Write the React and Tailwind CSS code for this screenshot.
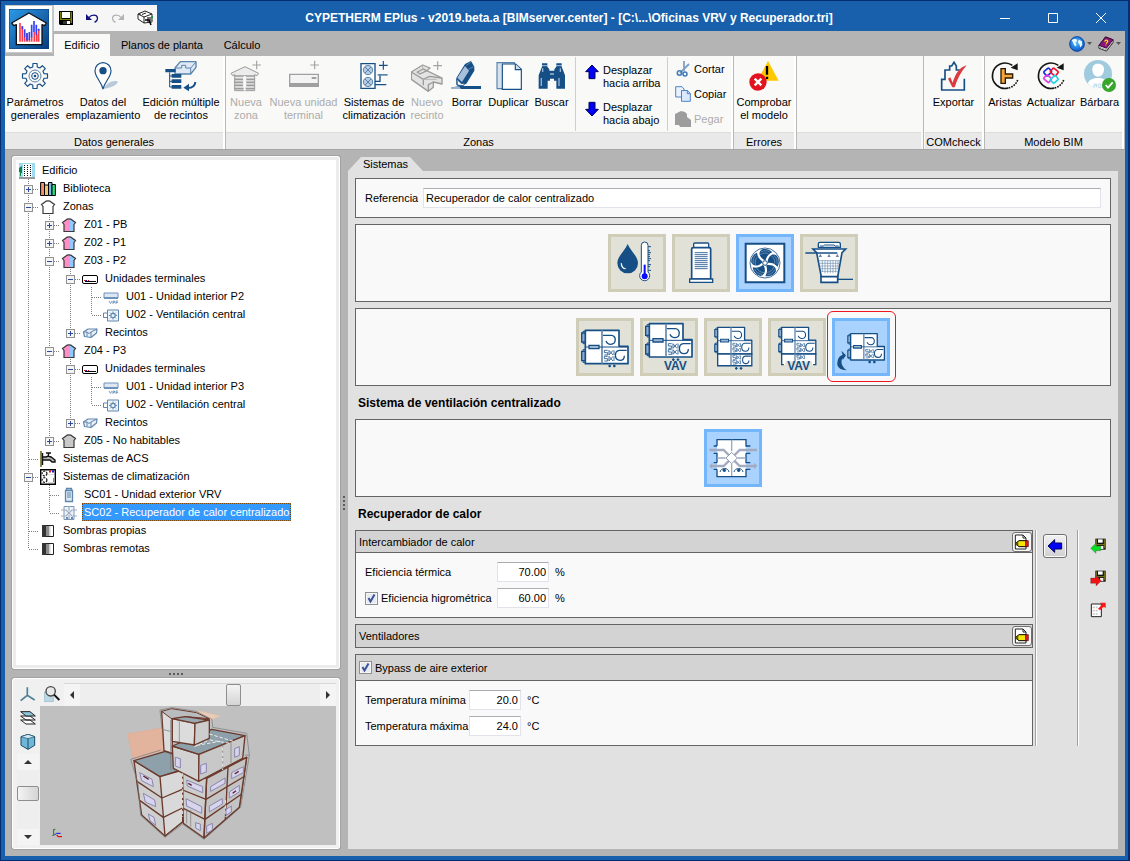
import React from "react";

const NAVY = "#164f86";

function Ico({ box, w = 32, h = 32, children }) {
  return (
    <svg viewBox={box} width={w} height={h} fill="none" aria-hidden="true" className="shrink-0">
      {children}
    </svg>
  );
}

/* ---------- ribbon and title icons ---------- */

function LogoIcon() {
  return (
    <Ico box="27 27 120 120" w={40} h={40}>
      <defs>
        <linearGradient id="logoBg" x1="0" y1="0" x2="1" y2="1">
          <stop offset="0" stopColor="#2d9ae8" />
          <stop offset="1" stopColor="#063a7c" />
        </linearGradient>
      </defs>
      <rect x="27" y="27" width="120" height="120" fill="url(#logoBg)" stroke="#0a3c78" strokeWidth="3" />
      <path d="M87 39 139 69 134 77 126 74V134H49V74L41 77 35 69Z" fill="#fff" stroke="#111" strokeWidth="4" strokeLinejoin="round" />
      <path d="M60 69V125M67 82V125M74 110V125M81 100V125M88 118V125M95 110V125M103 96V125M110 102V125M116 88V125" stroke="#ff3d48" strokeWidth="5" />
      <path d="M67 78V88M74 88V112M81 99V122M88 96V120M95 74V112M102 63V96M109 74V104M116 86V92" stroke="#3340f5" strokeWidth="5" />
    </Ico>
  );
}

function gearPath(cx, cy, r1, r2, teeth) {
  let d = "";
  for (let i = 0; i < teeth; i++) {
    const a = (i / teeth) * Math.PI * 2 - Math.PI / 2;
    const s = Math.PI / teeth;
    [[-0.62, r1], [-0.42, r2], [0.42, r2], [0.62, r1]].forEach(([k, r], j) => {
      const x = cx + r * Math.cos(a + k * s);
      const y = cy + r * Math.sin(a + k * s);
      d += `${i === 0 && j === 0 ? "M" : "L"}${x.toFixed(1)} ${y.toFixed(1)}`;
    });
  }
  return d + "Z";
}

function GearIcon() {
  return (
    <Ico box="57 180 96 96">
      <path d={gearPath(105, 228, 28, 38, 8)} stroke={NAVY} strokeWidth="3.5" strokeLinejoin="round" />
      <circle cx="105" cy="228" r="18" stroke="#5b84ac" strokeWidth="3" />
      <circle cx="105" cy="228" r="10" stroke={NAVY} strokeWidth="3" />
      <circle cx="105" cy="228" r="4" fill={NAVY} />
    </Ico>
  );
}

function PinIcon() {
  return (
    <Ico box="264 180 96 96">
      <path d="M312 267C322 250 340 240 356 244C358 254 335 264 312 267Z" fill="#b9c9dc" />
      <path d="M312 267C306 242 288 232 288 212A24 24 0 0 1 336 212C336 232 318 242 312 267Z" fill="#fff" stroke={NAVY} strokeWidth="3.5" />
      <circle cx="312" cy="212" r="11" fill={NAVY} />
    </Ico>
  );
}

function MultiEditIcon() {
  return (
    <Ico box="498 180 96 96">
      <path d="M528 204 544 185H591V202L575 222H528Z" fill="#dfe9f5" stroke="#5b84ac" strokeWidth="4" strokeLinejoin="round" />
      <path d="M528 204H548V196H560V204H575L591 186M575 204V222" stroke="#5b84ac" strokeWidth="3" />
      <path d="M499 207H530V217H499ZM518 222H547V233H518ZM518 238H547V249H518ZM518 255H547V266H518Z" fill={NAVY} />
      <path d="M512 217V261H520M512 228H520M512 244H520" stroke={NAVY} strokeWidth="3" />
      <path d="M589 246C588 258 578 264 566 264" stroke={NAVY} strokeWidth="6" />
      <path d="M553 263 570 251V274Z" fill={NAVY} />
    </Ico>
  );
}

function Plus({ x, y, c }) {
  return <path d={`M${x - 13} ${y}H${x + 13}M${x} ${y - 13}V${y + 13}`} stroke={c} strokeWidth="3.5" />;
}

function NewZoneIcon() {
  return (
    <Ico box="693 180 96 96">
      <path d="M738 200 779 220 774 227 767 224V272H707V224L701 227 696 220Z" fill="#ececec" stroke="#9b9b9b" strokeWidth="3" />
      <path d="M707 228H767M707 238H732M742 238H767M707 247H732M742 247H767M707 256H732M742 256H767M707 266H767" stroke="#9b9b9b" strokeWidth="5" />
      <path d="M737 228V272" stroke="#fafafa" strokeWidth="6" />
      <Plus x={773} y={195} c="#a3a3a3" />
    </Ico>
  );
}

function NewTerminalIcon() {
  return (
    <Ico box="861 180 96 96">
      <path d="M866 223H952V259H866Z" fill="#f4f4f4" stroke="#a0a0a0" strokeWidth="4" />
      <path d="M866 249H952V260H866Z" fill="#a0a0a0" />
      <path d="M932 231H946V237H932Z" fill="#a0a0a0" />
      <Plus x={941} y={195} c="#a3a3a3" />
    </Ico>
  );
}

function HvacIcon() {
  return (
    <Ico box="1077 180 96 96">
      <path d="M1086 191H1128V265H1086Z" fill="#fff" stroke={NAVY} strokeWidth="4" />
      <circle cx="1107" cy="210" r="14" fill="#b7cbe0" stroke="#5b84ac" strokeWidth="3" />
      <circle cx="1107" cy="246" r="14" fill="#b7cbe0" stroke="#5b84ac" strokeWidth="3" />
      <path d="M1098 201 1116 219M1116 201 1098 219M1098 237 1116 255M1116 237 1098 255" stroke="#5b84ac" strokeWidth="3" />
      <path d="M1128 254H1162M1128 244H1143V225" stroke={NAVY} strokeWidth="4" />
      <path d="M1136 222H1166V227H1136Z" fill="#5b84ac" />
      <Plus x={1153} y={196} c={NAVY} />
    </Ico>
  );
}

function NewRoomIcon() {
  return (
    <Ico box="123 30 96 96">
      <path d="M124 66 158 45 180 54 170 62 216 84V102L190 96V112L175 124 124 88Z" fill="#e3e3e3" stroke="#9b9b9b" strokeWidth="4" strokeLinejoin="round" />
      <path d="M124 66 160 88V106M160 88 178 79 216 84M175 124V104L190 96M142 66 160 57 170 62 150 72Z" stroke="#9b9b9b" strokeWidth="4" />
      <path d="M158 45V58M160 88 200 88" stroke="#b5b5b5" strokeWidth="3" />
      <Plus x={203} y={47} c="#a3a3a3" />
    </Ico>
  );
}

function EraseIcon() {
  return (
    <Ico box="246 30 96 96">
      <path d="M246 113 270 108H336V117H246Z" fill={NAVY} />
      <path d="M246 113 270 108 276 117H246Z" fill="#9db4cf" />
      <path d="M262 84 288 42 306 33 316 50V62L292 101 270 110 262 104Z" fill={NAVY} />
      <path d="M265 83 288 48 300 62 279 96Z" fill="#a9c0da" />
      <path d="M264 88 277 101 287 99 283 107 265 105Z" fill="#fff" stroke={NAVY} strokeWidth="2.5" />
      <path d="M292 46 305 37M298 58 314 50" stroke="#7f9fc0" strokeWidth="2" />
    </Ico>
  );
}

function DuplicateIcon() {
  return (
    <Ico box="366 30 96 96">
      <path d="M378 38H430V116H378Z" fill="#d7e2ee" stroke="#5b84ac" strokeWidth="3.5" />
      <path d="M394 42H434L451 58V118H394Z" fill="#fff" stroke={NAVY} strokeWidth="3.5" />
      <path d="M433 42V59H451" fill="#d7e2ee" stroke={NAVY} strokeWidth="3.5" />
    </Ico>
  );
}

function BinocularIcon() {
  return (
    <Ico box="495 30 96 96">
      <path d="M513 40H529V50L535 58V62H550V58L556 50V40H572V50L582 76V116H556V92H549V86H537V92H530V116H503V76L513 50Z" fill={NAVY} />
      <path d="M511 84V108M515 55V66M564 84V108M568 55V66M537 72H549" stroke="#9bb6d2" strokeWidth="4" />
      <path d="M513 47H529M556 47H572" stroke="#fff" strokeWidth="2" />
    </Ico>
  );
}

function ArrowIcon({ dir }) {
  const turn = { up: "", down: "rotate(180 24 24)", left: "rotate(-90 24 24)" }[dir];
  return (
    <Ico box="0 0 48 48" w={16} h={16}>
      <path transform={turn} d="M24 3 43 23H33V44H15V23H5Z" fill="#0000f4" stroke="#000060" strokeWidth="3" />
    </Ico>
  );
}

function ScissorsIcon() {
  return (
    <Ico box="0 0 16 16" w={16} h={16}>
      <path d="M9 0 9 10M14 3 5 12" stroke="#7f9fc4" strokeWidth="1.800" />
      <circle cx="4.500" cy="12" r="2.200" stroke="#3f7ab8" strokeWidth="1.500" />
      <circle cx="10" cy="13" r="2" stroke="#3f7ab8" strokeWidth="1.500" />
    </Ico>
  );
}

function CopyIcon() {
  return (
    <Ico box="0 0 16 16" w={16} h={16}>
      <path d="M.7.7H7L9 3V11H.7Z" fill="#eaf2ff" stroke="#4f83c4" />
      <path d="M6.500 4.500H12.500L15.300 7.500V15.300H6.500Z" fill="#dbe9ff" stroke="#4f83c4" />
      <path d="M12.300 4.500V7.700H15.300" stroke="#4f83c4" />
    </Ico>
  );
}

function PasteIcon() {
  return (
    <Ico box="0 0 16 16" w={16} h={16}>
      <path d="M0 3 4 1 6 0 10 1 12 3V6L16 9V16H5L4 14H0Z" fill="#9d9d9d" />
    </Ico>
  );
}

function CheckModelIcon() {
  return (
    <Ico box="1134 30 96 96">
      <path d="M1194 33 1226 92H1162Z" fill="#ffc800" />
      <path d="M1191 48V74M1191 80V87" stroke="#000" strokeWidth="7" />
      <circle cx="1164" cy="96" r="26" fill="#e3121f" />
      <path d="M1154 86 1174 106M1174 86 1154 106" stroke="#fff" strokeWidth="7" />
    </Ico>
  );
}

function ExportIcon() {
  return (
    <Ico box="504 180 96 96">
      <path d="M515 270V238H525V210H539V198H545L552 187 559 198V210H569M583 236V270H513" stroke={NAVY} strokeWidth="5" />
      <path d="M534 236 541 232 548 248C556 222 568 202 590 196C574 214 562 236 554 262H547Z" fill="#dc3a40" />
    </Ico>
  );
}

function Cycle({ cx }) {
  return (
    <>
      <path d={`M${cx + 22} 196A38 38 0 1 0 ${cx + 10} 264`} stroke="#161616" strokeWidth="5" />
      <path d={`M${cx + 38} 240A38 38 0 0 1 ${cx + 10} 264`} stroke="#161616" strokeWidth="5" strokeDasharray="5 3" />
      <path d={`M${cx + 38} 190V211L${cx + 17} 203Z`} fill="#161616" />
    </>
  );
}

function EdgesIcon() {
  return (
    <Ico box="660 180 96 96">
      <Cycle cx={708} />
      <path d="M696 206H709V222H731V234H709V250H696Z" fill="#f6a53a" stroke="#2b1a00" strokeWidth="4" />
    </Ico>
  );
}

function RefreshIcon() {
  return (
    <Ico box="798 180 96 96">
      <Cycle cx={846} />
      <rect x="826" y="208" width="20" height="16" rx="3" transform="rotate(-40 836 216)" stroke="#1c2fe0" strokeWidth="5" />
      <rect x="846" y="208" width="20" height="16" rx="3" transform="rotate(40 856 216)" stroke="#f0142c" strokeWidth="5" />
      <rect x="826" y="228" width="20" height="16" rx="3" transform="rotate(40 836 236)" stroke="#e33be0" strokeWidth="5" />
      <rect x="846" y="230" width="20" height="16" rx="3" transform="rotate(-40 856 238)" stroke="#22d3e6" strokeWidth="5" />
    </Ico>
  );
}

function UserIcon() {
  return (
    <Ico box="942 180 96 96">
      <circle cx="984" cy="222" r="42" fill="#a0cbdf" />
      <path d="M967 208C967 196 975 191 984 191S1002 196 1002 208C1002 220 995 230 984 230S967 220 967 208Z" fill="#fff" />
      <path d="M953 250C958 238 970 234 984 234S1010 238 1015 250A42 42 0 0 1 953 250Z" fill="#fff" />
      <path d="M972 262V252H980V262M972 257H980M985 252H992V262H985ZM997 252V262" stroke="#a0cbdf" strokeWidth="2" />
      <circle cx="1017" cy="255" r="21" fill="#38a52c" />
      <path d="M1007 255 1014 263 1028 247" stroke="#fff" strokeWidth="5" />
    </Ico>
  );
}

function SaveIcon() {
  return (
    <Ico box="0 0 14 14" w={14} h={14}>
      <path d="M0 0H14V14H1L0 13Z" fill="#000" />
      <path d="M1 1H2.500V8H1ZM11.500 1H13V12H11.500ZM1 8H13V9H1Z" fill="#808000" />
      <path d="M3 1H11V7H3Z" fill="#fff" />
      <path d="M4 10H9V13H4Z" fill="#333" />
      <path d="M8 10H11V13H8Z" fill="#fff" />
    </Ico>
  );
}

function UndoIcon({ color, flip }) {
  return (
    <Ico box="0 0 14 10" w={14} h={10}>
      <g transform={flip ? "translate(14 0) scale(-1 1)" : undefined}>
        <path d="M1 1V7H7Z" fill={color} />
        <path d="M4 4.500C6 1.500 12 1 12.500 5C12.500 7 11 9 9.500 9" stroke={color} strokeWidth="1.300" />
      </g>
    </Ico>
  );
}

function RoomExportIcon() {
  return (
    <Ico box="0 0 18 16" w={18} h={16}>
      <path d="M1 4 8 1 15 4V12L7 13 1 9Z" fill="#fff" stroke="#222" />
      <path d="M1 4 7 7 15 4M7 7V13M3 5V3.500M5 4.500 9 3" stroke="#222" />
      <path d="M10 7H15V12H10Z" fill="#777" />
      <path d="M8 10H12L14 15" stroke="#000" strokeWidth="1.500" />
      <path d="M14 6H16V8H14Z" fill="#1d9b3c" />
    </Ico>
  );
}

function GlobeIcon() {
  return (
    <Ico box="0 0 18 18" w={16} h={16}>
      <defs>
        <radialGradient id="globeBg" cx=".45" cy=".4" r=".6">
          <stop offset="0" stopColor="#57c4ff" />
          <stop offset="1" stopColor="#0b55c8" />
        </radialGradient>
      </defs>
      <circle cx="9" cy="9" r="8.300" fill="url(#globeBg)" stroke="#08439c" />
      <path d="M3 5C5 3 9 3 9 5S7 6 7.500 8 9 9 8 11 5 9 4.500 7ZM11 4 14.500 6 15 10 12.500 13 12 10 10 7Z" fill="#e9f8ff" />
    </Ico>
  );
}

function BookIcon() {
  return (
    <Ico box="0 0 17 17" w={16} h={16}>
      <path d="M1 10 8 1 16 4V7L9 16 1 13Z" fill="#fff" stroke="#222" />
      <path d="M1 10 8 1 16 4 9 13Z" fill="#8a1480" stroke="#3a0834" />
      <path d="M2 12 9 14.500 16 6" stroke="#777" strokeWidth=".7" />
      <path d="M7 6C8 3.500 11.500 4.500 10 6.500L8.500 8M8 9.500H8.800" stroke="#ffe600" strokeWidth="1.300" />
    </Ico>
  );
}

function Caret() {
  return (
    <svg viewBox="0 0 5 3" width="5" height="3" aria-hidden="true"><path d="M0 0H5L2.500 3Z" fill="#555" /></svg>
  );
}

/* ---------- tree icons (16 x 16) ---------- */

const house = (fill) => (
  <Ico box="0 0 16 16" w={16} h={16}>
    <path d="M1.500 5.500 5 3C6 1.500 10 1.500 11 3L14.500 5.500 13 7.500V14.500H3V7.500Z" fill={fill} stroke="#3a3a3a" strokeWidth="1.200" />
  </Ico>
);

const TREE_ICONS = {
  building: (
    <Ico box="0 0 16 16" w={16} h={16}>
      <path d="M0 0H16V14H0Z" fill="#9fdcf0" /><path d="M0 14H16V16H0Z" fill="#9a9a9a" />
      <path d="M4 1H13V14H4Z" fill="#fff" />
      <path d="M5.500 2V13M8.500 2V13M11.500 2V13" stroke="#111" strokeWidth="1" strokeDasharray="1 1" />
      <path d="M0 5 3 3V10H2V13H1V9H0Z" fill="#12804b" />
    </Ico>
  ),
  books: (
    <Ico box="0 0 16 16" w={16} h={16}>
      <path d="M.6 1.500H4.500V14.500H.6Z" fill="#f19072" stroke="#000" /><path d="M4.500 4H8.500V14.500H4.500Z" fill="#f5c56b" stroke="#000" />
      <path d="M8.500 1.500H12V14.500H8.500Z" fill="#7db8e8" stroke="#000" /><path d="M12 3.500H15.400V14.500H12Z" fill="#28e07c" stroke="#000" />
    </Ico>
  ),
  zones: house("#fff"),
  zone: (
    <Ico box="0 0 16 16" w={16} h={16}>
      <path d="M1.500 5.500 5 3C6 1.500 10 1.500 11 3L14.500 5.500 13 7.500V14.500H3V7.500Z" fill="#ff8fc6" />
      <path d="M9 2H10.500L14.500 5.500 13 7.500V14.500H9Z" fill="#90c8ff" />
      <path d="M1.500 5.500 5 3C6 1.500 10 1.500 11 3L14.500 5.500 13 7.500V14.500H3V7.500Z" stroke="#3a3a3a" strokeWidth="1.200" />
    </Ico>
  ),
  zoneGray: house("#c9c9c9"),
  terminals: (
    <Ico box="0 0 16 16" w={16} h={16}>
      <rect x=".5" y="4.500" width="15" height="8" rx="1.500" fill="#fff" stroke="#000" />
      <path d="M3 10.500H14" stroke="#000" /><path d="M2 9.500H4M6 9.500H7" stroke="#e01010" /><path d="M4 9.500H5" stroke="#1010e0" />
    </Ico>
  ),
  indoor: (
    <Ico box="0 0 16 16" w={16} h={16}>
      <path d="M1 4H15V9H1Z" fill="#dce7f3" stroke="#6e93b9" /><path d="M1 8H15V10H1Z" fill="#6e93b9" />
      <path d="M6 12 7.500 14.500 9 12M10 15V12H11.500V13.500H10M13 15V12H15M13 13.500H15" stroke="#6e93b9" strokeWidth=".9" />
    </Ico>
  ),
  fan: (
    <Ico box="0 0 16 16" w={16} h={16}>
      <path d="M4.500 3H15.500V14H4.500Z" fill="#eef4fa" stroke="#5e86ae" /><path d="M4 6H.500V10.500H4" stroke="#5e86ae" />
      <circle cx="10" cy="8.500" r="2.200" stroke="#5e86ae" strokeWidth="1.200" />
      <path d="M10 4.500V6M10 11V12.500M6 8.500H7.500M12.500 8.500H14M7.200 5.700 8.300 6.800M12.800 5.700 11.700 6.800M7.200 11.300 8.300 10.200M12.800 11.300 11.700 10.200" stroke="#5e86ae" />
    </Ico>
  ),
  rooms: (
    <Ico box="0 0 16 16" w={16} h={16}>
      <path d="M1.500 7 6 4H15L14.500 8 9 12.500 2.500 11.500Z" fill="#e8f0f8" stroke="#6285ad" strokeWidth="1.200" strokeLinejoin="round" />
      <path d="M1.500 7H5L7 8.500 9 7 15 4M9 7V12M5 7V11.500" stroke="#6285ad" />
    </Ico>
  ),
  tap: (
    <Ico box="0 0 16 16" w={16} h={16}>
      <path d="M0 0H2V16H0Z" fill="#8c8c50" /><path d="M2.500 2V14M6 2H11M8.500 2V6M2.500 6H6L8 5 11 6 15 9V11H12L10 9H2.500" stroke="#111" strokeWidth="1.400" fill="#b9b9b9" />
    </Ico>
  ),
  hvac: (
    <Ico box="0 0 16 16" w={16} h={16}>
      <path d="M.7.7H15.300V15.300H.7Z" fill="#fff" stroke="#000" strokeWidth="1.400" />
      <circle cx="4.500" cy="4.500" r="2.400" stroke="#222" strokeWidth="1.300" strokeDasharray="2 1" /><circle cx="4.500" cy="11" r="2.400" stroke="#222" strokeWidth="1.300" strokeDasharray="2 1" />
      <path d="M9 2.500H11" stroke="#f01010" strokeWidth="2" /><path d="M12 2.500H14" stroke="#1010f0" strokeWidth="2" />
      <path d="M8 5.500H14M8 13.500H14" stroke="#ddd" /><path d="M13.500 9V13" stroke="#888" />
    </Ico>
  ),
  vrv: (
    <Ico box="0 0 16 16" w={16} h={16}>
      <path d="M5.500 1.500H10.500V3.500H5.500ZM4.500 3.500H11.500V14.500H4.500Z" fill="#dfe9f4" stroke="#5e86ae" strokeWidth="1.300" />
      <path d="M6 6H10M6 8H10M6 10H10" stroke="#5e86ae" />
    </Ico>
  ),
  recuperator: (
    <Ico box="0 0 16 16" w={16} h={16}>
      <path d="M3 1.500H13V14.500H3Z" fill="#eef3f9" stroke="#7c97b6" /><path d="M0 5H5L11 11H16M16 5H11L5 11H0M8 1V6M8 10V14" stroke="#9fb0c6" strokeWidth="1.200" />
      <path d="M5 13H7M10 13H12" stroke="#37679a" strokeWidth="1.500" />
    </Ico>
  ),
  shade: (
    <Ico box="0 0 16 16" w={16} h={16}>
      <path d="M2.500 2.500H13.500V13.500H2.500Z" fill="#fff" stroke="#222" /><path d="M2 2H6V14H2Z" fill="#333" /><path d="M6 3H9V13H6Z" fill="#8c8c8c" /><path d="M9 3H10.500V13H9Z" fill="#d0d0d0" />
    </Ico>
  ),
};

/* Guides: "|" passes through, "T" branches, "L" ends; "+" and "-" add an expander. */
const TREE = [
  ["building", "Edificio", []],
  ["books", "Biblioteca", ["T+"]],
  ["zones", "Zonas", ["T-"]],
  ["zone", "Z01 - PB", ["|", "T+"]],
  ["zone", "Z02 - P1", ["|", "T+"]],
  ["zone", "Z03 - P2", ["|", "T-"]],
  ["terminals", "Unidades terminales", ["|", "|", "T-"]],
  ["indoor", "U01 - Unidad interior P2", ["|", "|", "|", "T"]],
  ["fan", "U02 - Ventilación central", ["|", "|", "|", "L"]],
  ["rooms", "Recintos", ["|", "|", "L+"]],
  ["zone", "Z04 - P3", ["|", "T-"]],
  ["terminals", "Unidades terminales", ["|", "|", "T-"]],
  ["indoor", "U01 - Unidad interior P3", ["|", "|", "|", "T"]],
  ["fan", "U02 - Ventilación central", ["|", "|", "|", "L"]],
  ["rooms", "Recintos", ["|", "|", "L+"]],
  ["zoneGray", "Z05 - No habitables", ["|", "L+"]],
  ["tap", "Sistemas de ACS", ["T"]],
  ["hvac", "Sistemas de climatización", ["T-"]],
  ["vrv", "SC01 - Unidad exterior VRV", ["|", "T"]],
  ["recuperator", "SC02 - Recuperador de calor centralizado", ["|", "L"], true],
  ["shade", "Sombras propias", ["T"]],
  ["shade", "Sombras remotas", ["L"]],
];

function Guide({ kind }) {
  const line = kind[0];
  const mark = kind[1];
  return (
    <svg width="21" height="18" viewBox="0 0 21 18" fill="none" shapeRendering="crispEdges" aria-hidden="true" className="shrink-0">
      <path d={line === "L" ? "M10.5 0V10" : "M10.5 0V18"} stroke="#808080" strokeDasharray="1 1" />
      {line !== "|" && <path d="M11 10.5H21" stroke="#808080" strokeDasharray="1 1" />}
      {mark && (
        <>
          <rect x="6.500" y="6.500" width="8" height="8" fill="#f4f4f4" stroke="#919191" />
          <path d={mark === "+" ? "M8 10.5H13M10.5 8V13" : "M8 10.5H13"} stroke="#2b4a9b" />
        </>
      )}
    </svg>
  );
}

function TreePanel() {
  return (
    <nav aria-label="Edificio" className="flex-1 rounded-[2px] border border-white bg-[#ececec] p-[3px] outline outline-[#a2a2a2]">
      <ul className="h-full bg-white pt-px pl-[2px]">
        {TREE.map(([icon, text, guides, selected], i) => (
          <li key={i} className="flex h-[18px] items-center">
            {guides.map((g, j) => <Guide key={j} kind={g} />)}
            <span className="flex w-[22px] shrink-0 pl-px pt-px">{TREE_ICONS[icon]}</span>
            <button
              type="button"
              className={
                selected
                  ? "h-[18px] border border-dotted border-[#7a4a10] bg-[#3399ff] px-px text-left text-white"
                  : "h-[18px] px-[2px] text-left"
              }
            >
              {text}
            </button>
          </li>
        ))}
      </ul>
    </nav>
  );
}

/* ---------- 3D view ---------- */

function Building3D() {
  return (
    <svg viewBox="120 108 888 417" className="block w-full flex-1 bg-[#c0c0c0]" fill="none" role="img" aria-label="Vista 3D">
      <g stroke="#6b3a2c" strokeWidth="4" strokeLinejoin="round">
        <path d="M383 192 487 174 492 240 400 266Z" fill="#e2b39d" stroke="#e9a98e" strokeWidth="2" />
        <path d="M575 128 600 124 660 138 630 150Z" fill="#e8cdb8" stroke="#e9c1a8" strokeWidth="2" />
        <path d="M485 124 517 130V250L492 242Z" fill="#dcdcdc" />
        <path d="M485 124 515 116 590 128 628 146 560 140 517 148Z" fill="#b9bdc0" strokeWidth="3" />
        <path d="M402 272 480 320 548 300V455L495 498 425 435 411 340Z" fill="#cfcfcf" />
        <path d="M402 272 496 244 545 262V300L480 320Z" fill="#8ea1ab" />
        <path d="M480 320 548 300V455L495 498Z" fill="#d9d9d9" />
        <path d="M411 334 486 384 547 358M420 392 490 442 547 414" />
        <path d="M548 300 620 325 740 262 718 412 612 504 550 460Z" fill="#cdcdcd" />
        <path d="M620 325 740 262 718 412 612 504Z" fill="#c4c4c4" />
        <path d="M548 360 618 388 735 318M550 415 615 448 725 372M620 325 612 504M684 290 676 448" />
        <path d="M517 228 597 253 596 334 520 295Z" fill="#d2d2d2" />
        <path d="M517 228 635 178 735 197 597 253Z" fill="#8ea1ab" />
        <path d="M597 253 735 197 728 265 596 334Z" fill="#c8c8c8" />
        <path d="M693 216V280M668 226V296" stroke="#8f8f8f" strokeWidth="3" />
        <path d="M517 146 585 160 583 225 517 214Z" fill="#dcdcdc" />
        <path d="M517 146 555 140 628 150 585 160Z" fill="#9aa9b1" />
        <path d="M585 160 628 150V205L583 225Z" fill="#cdcdcd" />
      </g>
      <g stroke="#f4eee8" strokeWidth="3" strokeDasharray="10 6">
        <path d="M583 230 628 210M590 226 660 214M628 192 700 214M630 210 690 220M668 232V300M548 310V440M676 390V440" />
      </g>
      <g fill="#d8d4ee" stroke="#8986ad" strokeWidth="3">
        <path d="M419 308 456 328 460 350 425 332ZM430 370 464 390 467 410 436 396ZM445 432 462 442 467 466 450 452Z" />
        <path d="M560 330 608 350V368L562 348ZM558 386 605 410V430L560 408ZM587 458 601 462V482L587 474Z" />
        <path d="M632 350 675 324V340L632 364ZM628 408 667 386V402L628 426ZM620 468 637 460V480L620 490Z" />
        <path d="M695 308 730 290V308L695 326ZM688 366 718 346V366L688 384ZM678 418 694 408V426L678 436Z" />
        <path d="M526 262 541 266V294L526 288ZM602 286 619 280V306L602 312ZM704 236 718 230V256L704 262Z" />
      </g>
      <path d="M430 318 446 328M565 340 575 346M704 312 716 304M698 370 708 362" stroke="#5c2630" strokeWidth="4" />
      <g stroke="#777" strokeWidth="2">
        <path d="M392 268 414 340 422 436 495 502 548 462 612 508 722 412 748 256 740 190 638 172 636 148 588 124 516 113 480 120 486 178 512 184" />
        <path d="M512 150V300M538 152V216M392 268 482 240M560 420V460M572 420V470M748 256 735 255" />
      </g>
      <path d="M157 496H161V478H166" stroke="#128012" strokeWidth="3" />
      <path d="M163 495 170 490H182" stroke="#1212e0" strokeWidth="3" />
      <path d="M170 495 175 500H186" stroke="#e01212" strokeWidth="4" />
    </svg>
  );
}

function SmallArrow({ d }) {
  return <svg width="8" height="8" viewBox="0 0 8 8" aria-hidden="true"><path d={d} fill="#333" /></svg>;
}

function ViewPanel() {
  return (
    <section className="flex h-[171px] flex-col rounded-[2px] border border-white bg-[#f0f0f0] p-[3px] outline outline-[#a2a2a2]">
      <div className="flex h-6 items-center">
        <div className="flex w-12 shrink-0 gap-2 pl-1">
          <button type="button" aria-label="Ejes">
            <Ico box="60 48 48 48" w={16} h={16}>
              <path d="M82 52V76M62 92 82 76 104 90" stroke="#4f7f95" strokeWidth="5" /><path d="M86 52V70" stroke="#cfe3ec" strokeWidth="4" />
            </Ico>
          </button>
          <button type="button" aria-label="Zoom">
            <Ico box="132 48 48 48" w={16} h={16}>
              <path d="M133 66H160V95H133Z" fill="#bcd6e2" stroke="#8fb6c8" strokeWidth="2" />
              <circle cx="152" cy="64" r="14" fill="#e8e8e8" stroke="#444" strokeWidth="4" /><path d="M162 74 178 90" stroke="#111" strokeWidth="6" />
            </Ico>
          </button>
        </div>
        <div className="flex flex-1 items-center border-t border-[#d8d8d8] bg-[#f4f4f4]">
          <button type="button" aria-label="Izquierda" className="flex w-4 justify-center"><SmallArrow d="M6 0V8L2 4Z" /></button>
          <input
            type="range"
            aria-label="Giro horizontal"
            defaultValue="65"
            className="h-[22px] min-w-0 flex-1 appearance-none bg-[#eeeeee] [&::-webkit-slider-thumb]:h-[22px] [&::-webkit-slider-thumb]:w-[15px] [&::-webkit-slider-thumb]:appearance-none [&::-webkit-slider-thumb]:rounded-[2px] [&::-webkit-slider-thumb]:border [&::-webkit-slider-thumb]:border-[#8e8e8e] [&::-webkit-slider-thumb]:bg-linear-to-b [&::-webkit-slider-thumb]:from-[#f4f4f4] [&::-webkit-slider-thumb]:to-[#d4d4d4]"
          />
          <button type="button" aria-label="Derecha" className="flex w-4 justify-center"><SmallArrow d="M2 0V8L6 4Z" /></button>
        </div>
      </div>
      <div className="flex min-h-0 flex-1">
        <div className="flex w-6 shrink-0 flex-col items-center pt-1">
          <button type="button" aria-label="Capas">
            <Ico box="60 120 48 48" w={16} h={16}>
              <path d="M62 150H90L106 162H78ZM62 138H90L106 150H78Z" fill="#fff" stroke="#222" strokeWidth="3" />
              <path d="M62 125H90L106 138H78Z" fill="#8fc5dd" stroke="#222" strokeWidth="3" />
            </Ico>
          </button>
          <button type="button" aria-label="Cubo" className="mt-2">
            <Ico box="60 192 48 48" w={16} h={16}>
              <path d="M63 200 84 193 104 200V226L84 238 63 226Z" fill="#6fb7d8" stroke="#1d4a63" strokeWidth="3" />
              <path d="M63 200 84 206 104 200 84 193Z" fill="#cfe9f5" stroke="#1d4a63" strokeWidth="2" /><path d="M84 206V238" stroke="#1d4a63" strokeWidth="3" />
            </Ico>
          </button>
          <div className="mt-1 flex min-h-0 flex-1 flex-col items-center bg-[#f4f4f4]">
            <button type="button" aria-label="Arriba" className="flex h-4 items-center"><SmallArrow d="M0 6H8L4 2Z" /></button>
            <input
              type="range"
              aria-label="Giro vertical"
              defaultValue="36"
              className="min-h-0 w-[22px] flex-1 appearance-none bg-[#eeeeee] [writing-mode:vertical-lr] [&::-webkit-slider-thumb]:h-[15px] [&::-webkit-slider-thumb]:w-[22px] [&::-webkit-slider-thumb]:appearance-none [&::-webkit-slider-thumb]:rounded-[2px] [&::-webkit-slider-thumb]:border [&::-webkit-slider-thumb]:border-[#8e8e8e] [&::-webkit-slider-thumb]:bg-linear-to-r [&::-webkit-slider-thumb]:from-[#f4f4f4] [&::-webkit-slider-thumb]:to-[#d4d4d4]"
            />
            <button type="button" aria-label="Abajo" className="flex h-4 items-center"><SmallArrow d="M0 2H8L4 6Z" /></button>
          </div>
        </div>
        <Building3D />
      </div>
    </section>
  );
}

/* ---------- system tiles (52 px drawings) ---------- */

function DropIcon() {
  return (
    <Ico box="153 51 156 156" w={52} h={52}>
      <path d="M203 72C212 94 234 108 234 130A31 30 0 0 1 172 130C172 108 194 94 203 72Z" fill={NAVY} />
      <path d="M184 130C184 140 190 146 197 146" stroke="#fff" strokeWidth="4" />
      <path d="M244 76A10 10 0 0 1 264 76V156A15 15 0 1 1 244 156Z" fill="#fff" stroke={NAVY} strokeWidth="3" />
      <path d="M254 134V168" stroke="#0b0bff" strokeWidth="6" />
      <circle cx="254" cy="169" r="9" fill="#0b0bff" />
      <path d="M264 80H273M264 92H270M264 98H273M264 104H270M264 110H270M264 116H273M264 122H270M264 134H273M264 140H270M264 151H273" stroke={NAVY} strokeWidth="3" />
    </Ico>
  );
}

function TowerUnitIcon() {
  return (
    <Ico box="345 51 156 156" w={52} h={52}>
      <path d="M401 83V72Q401 69 404 69H443Q446 69 446 72V83Z" fill="#fff" stroke={NAVY} strokeWidth="4" />
      <path d="M395 87Q395 83 400 83H447Q452 83 452 87V177H395Z" fill="#fff" stroke={NAVY} strokeWidth="5" />
      <path d="M389 177H458V187H389Z" fill="#fff" stroke={NAVY} strokeWidth="4" />
      <path d="M404 98H443M404 104H443M404 110H443M404 116H443M404 122H443M404 128H443M404 134H443M404 140H443M404 146H443" stroke="#41709f" strokeWidth="3" />
    </Ico>
  );
}

function FanUnitIcon() {
  const blades = [0, 72, 144, 216, 288];
  return (
    <Ico box="537 51 156 156" w={52} h={52}>
      <path d="M557 71H673V187H557Z" fill="#fff" stroke={NAVY} strokeWidth="6" />
      <circle cx="615" cy="129" r="45" stroke="#41709f" strokeWidth="3" />
      {blades.map((b) => (
        <g key={b} transform={`rotate(${b} 615 129)`}>
          <path d="M613 120C598 112 594 98 604 89C616 84 630 88 637 97C628 100 620 108 617 120Z" fill={NAVY} />
          <path d="M600 104C610 98 618 98 626 102M602 96C612 91 620 91 630 96" stroke="#7f9fc0" strokeWidth="2" />
        </g>
      ))}
      <circle cx="615" cy="129" r="7" fill="#fff" stroke={NAVY} strokeWidth="3" />
    </Ico>
  );
}

function CoolingTowerIcon() {
  return (
    <Ico box="729 51 156 156" w={52} h={52}>
      <path d="M775 82V71Q775 67 780 67H836Q841 67 841 71V82Z" fill="#fff" stroke={NAVY} strokeWidth="4" />
      <path d="M780 78H790L794 75H822L826 78H836" stroke={NAVY} strokeWidth="3" />
      <path d="M759 87H857L846 98 833 171H784L770 98Z" fill="#fff" stroke={NAVY} strokeWidth="5" />
      <path d="M736 99H832" stroke={NAVY} strokeWidth="5" />
      <path d="M781 101 786 111H776ZM807 101 812 111H802ZM832 101 837 111H827Z" fill="#6f7fa6" />
      <path d="M776 122H840M776 130H840M778 138H838M779 146H836M781 154H835M787 121V156M795 121V160M803 121V160M811 121V160M819 121V160M827 121V158M834 121V148" stroke="#6f8fb2" strokeWidth="2" />
      <path d="M783 170H833V187H783Z" fill="#fff" stroke={NAVY} strokeWidth="5" />
      <path d="M833 178H879" stroke={NAVY} strokeWidth="4" />
    </Ico>
  );
}

/* Filter and coil section drawn between the duct and the lower fan. */
function Coil({ y }) {
  return (
    <g transform={`translate(0 ${y})`} stroke="#41709f" strokeWidth="3">
      <path d="M67 1H57V8H67V15H57M71 1V15M71 1 83 15M83 1 71 15M86 1V15" />
    </g>
  );
}

/* Air handling unit; x and y are the top-left corner of its case. */
function Ahu({ x, y, s = 1, third, open }) {
  return (
    <g transform={`translate(${x} ${y}) scale(${s})`}>
      <path d="M0 3H-7V40H0M0 58H-7V96H0" stroke={NAVY} strokeWidth="3" />
      <path d="M0 8H-11V35H0M0 63H-11V91H0" fill="#8eabc9" stroke={NAVY} strokeWidth="4" />
      <path d="M0 0H101V48H128V100H0Z" fill="#fff" stroke={NAVY} strokeWidth="5" strokeLinejoin="round" />
      {third && <path d={open ? "M8 140H0V100H128V140H118" : "M0 100H128V144H0Z"} fill="#fff" stroke={NAVY} strokeWidth="5" />}
      <path d={third ? "M50 0V142" : "M50 0V100"} stroke="#6388ae" strokeWidth="5" />
      <path d="M0 50H128" stroke={NAVY} strokeWidth="3" />
      <path d="M11 45H41V55H11Z" fill="#9db8d3" stroke={NAVY} strokeWidth="4" />
      <path d="M53 15H78C94 15 94 42 76 42C68 42 64 37 62 32" stroke={NAVY} strokeWidth="4" fill="#fff" />
      <path d="M124 60H102C86 62 86 90 104 90C112 90 117 84 117 76" stroke={NAVY} strokeWidth="4" fill="#fff" />
      <Coil y={59} />
      <Coil y={77} />
      {third && !open && (
        <>
          <Coil y={105} />
          <Coil y={123} />
          <path d="M124 108H104C90 110 90 136 104 136C112 136 117 130 117 124" stroke={NAVY} strokeWidth="4" />
        </>
      )}
      {third && open && <Coil y={104} />}
    </g>
  );
}

function Feet({ x, y }) {
  return <path d={`M${x} ${y}V${y + 8}M${x - 4} ${y + 4}H${x + 4}M${x + 14} ${y}V${y + 8}M${x + 10} ${y + 4}H${x + 18}`} stroke={NAVY} strokeWidth="4" />;
}

function VavText({ x, y, size = 36 }) {
  return <text x={x} y={y} textAnchor="middle" fill={NAVY} fontSize={size} fontWeight="700" className="font-['Liberation_Sans',sans-serif]">VAV</text>;
}

const SYSTEMS = [
  ["Caudal de aire constante", <Ico key="a" box="57 303 156 156" w={52} h={52}><Ahu x={76} y={331} /><Feet x={149} y={434} /></Ico>],
  ["Caudal variable", (
    <Ico key="b" box="249 303 156 156" w={52} h={52}>
      <Ahu x={268} y={311} /><Feet x={340} y={415} /><VavText x={346} y={451} />
    </Ico>
  )],
  ["Tres secciones", <Ico key="c" box="441 303 156 156" w={52} h={52}><Ahu x={473} y={322} s={0.8} third /><Feet x={529} y={441} /></Ico>],
  ["Tres secciones, caudal variable", (
    <Ico key="d" box="633 303 156 156" w={52} h={52}>
      <Ahu x={665} y={322} s={0.8} third open /><path d="M676 424H756V456H676Z" fill="#e1e1d7" /><VavText x={716} y={451} />
    </Ico>
  )],
  ["Ventilación centralizada", (
    <Ico key="e" box="825 303 156 156" w={52} h={52}>
      <Ahu x={872} y={341} s={0.79} /><Feet x={929} y={422} />
      <path d="M861 451C838 449 828 440 833 422C836 410 842 406 848 405L844 392 858 406 848 420 847 414C841 428 846 442 861 451Z" fill={NAVY} />
    </Ico>
  )],
];

const KINDS = [
  ["Agua", <DropIcon key="1" />],
  ["Unidad exterior", <TowerUnitIcon key="2" />],
  ["Aire", <FanUnitIcon key="3" />],
  ["Torre de refrigeración", <CoolingTowerIcon key="4" />],
];

function RecuperatorIcon() {
  return (
    <Ico box="1086 126 156 156" w={52} h={52}>
      <path d="M1116 149H1203V260H1116Z" fill="#fff" />
      <path d="M1116 168V149H1203V168H1216M1116 168H1106M1116 218V190H1106M1203 190V218H1216M1203 190H1216M1106 218H1116M1116 238H1106M1116 238V260H1203V238H1216" stroke={NAVY} strokeWidth="4" />
      <path d="M1160 149V184M1160 222V258M1116 204H1142M1177 204H1203" stroke="#9aa8c4" strokeWidth="4" />
      <path d="M1093 180H1136L1184 228H1230M1236 180H1184L1136 228H1098" stroke="#a2aabf" strokeWidth="7" />
      <path d="M1160 187 1177 204 1160 221 1143 204Z" fill="#fff" stroke="#8d98b3" strokeWidth="3" />
      <path d="M1102 218 1092 228 1102 238ZM1227 218 1237 228 1227 238Z" fill="#a2aabf" />
      <path d="M1125 246C1128 232 1150 232 1152 246M1167 246C1170 232 1192 232 1194 246" stroke={NAVY} strokeWidth="3" />
      <circle cx="1138" cy="241" r="5" fill={NAVY} /><circle cx="1181" cy="241" r="5" fill={NAVY} />
    </Ico>
  );
}

function Tile({ label, active, marked, children }) {
  return (
    <button
      type="button"
      aria-label={label}
      aria-pressed={!!active}
      className={
        active
          ? "relative h-[58px] w-[58px] border-3 border-[#74b6fb] bg-[#aad2ff]"
          : "relative h-[58px] w-[58px] border-3 border-[#cfcdb8] bg-[#e1e1d7]"
      }
    >
      {children}
      {marked && <span className="pointer-events-none absolute -top-[10px] -right-[9px] -bottom-[9px] -left-[8px] rounded-[6px] border border-[#f01420]" />}
    </button>
  );
}

/* ---------- form parts ---------- */

function EditIcon() {
  return (
    <Ico box="107 42 48 48" w={16} h={16}>
      <path d="M111 45H134L143 54V87H111Z" fill="#fff" stroke="#222" strokeWidth="3" />
      <path d="M134 45V54H143" stroke="#222" strokeWidth="3" />
      <path d="M110 71 122 62H144V80H122Z" fill="#f4e400" stroke="#000" strokeWidth="3" />
      <path d="M142 62H150V80H142Z" fill="#f01818" stroke="#500" strokeWidth="2" />
      <path d="M110 71 120 64V78Z" fill="#5a5a10" />
    </Ico>
  );
}

function Check({ id }) {
  return (
    <span className="grid h-[13px] w-[13px] shrink-0">
      <input id={id} type="checkbox" defaultChecked className="peer col-start-1 row-start-1 m-0 h-[13px] w-[13px] appearance-none border border-[#8e8f8f] bg-[#e6eaf2] shadow-[inset_0_0_0_1px_#f6f6f6]" />
      <svg viewBox="0 0 13 13" className="pointer-events-none invisible col-start-1 row-start-1 h-[13px] w-[13px] peer-checked:visible" fill="none" aria-hidden="true">
        <path d="M3.500 6 5.500 9.500 9.500 2.500" stroke="#3c5296" strokeWidth="2" />
      </svg>
    </span>
  );
}

const FIELD = "h-5 border border-[#e2e3ea] border-t-[#abadb3] bg-white";

function NumberRow({ id, label, value, unit, check, labelWidth }) {
  return (
    <div className="flex h-5 items-center">
      <div className={`flex items-center gap-[3px] whitespace-nowrap ${labelWidth}`}>
        {check && <Check id={`${id}-on`} />}
        <label htmlFor={id}>{label}</label>
      </div>
      <input id={id} defaultValue={value} className={`${FIELD} w-[52px] px-[2px] text-right`} />
      <span className="pl-[6px]">{unit}</span>
    </div>
  );
}

function EditButton({ label }) {
  return (
    <button type="button" aria-label={label} className="flex h-5 w-5 items-center justify-center rounded-[3px] border border-[#707070] bg-[#f6f6f6]">
      <EditIcon />
    </button>
  );
}

const BOX = "border border-[#646464] bg-[#f9f9f9]";

function Workspace() {
  return (
    <main className="flex min-w-0 flex-1 flex-col">
      <div className="flex">
        <button type="button" className="mt-px h-[14px] w-[75px] bg-[#e1e1e1] leading-[14px] [clip-path:polygon(13px_0,62px_0,100%_100%,0_100%)]">Sistemas</button>
      </div>
      <div className="flex-1 bg-[#e1e1e1] p-[7px]">
        <div className={`${BOX} flex h-10 items-center gap-[6px] px-[9px]`}>
          <label htmlFor="ref" className="w-[52px]">Referencia</label>
          <input id="ref" defaultValue="Recuperador de calor centralizado" className={`${FIELD} min-w-0 flex-1 px-[2px]`} />
        </div>
        <div className={`${BOX} mt-[6px] flex justify-center gap-[6px] py-[9px]`}>
          {KINDS.map(([label, icon], i) => <Tile key={label} label={label} active={i === 2}>{icon}</Tile>)}
        </div>
        <div className={`${BOX} mt-[6px] flex justify-center gap-[6px] py-[9px]`}>
          {SYSTEMS.map(([label, icon], i) => <Tile key={label} label={label} active={i === 4} marked={i === 4}>{icon}</Tile>)}
        </div>
        <h2 className="h-[33px] pl-[3px] text-[12px] leading-[34px] font-bold">Sistema de ventilación centralizado</h2>
        <div className={`${BOX} flex justify-center py-[9px]`}>
          <Tile label="Recuperador de calor" active><RecuperatorIcon /></Tile>
        </div>
        <h2 className="h-[33px] pl-[3px] text-[12px] leading-[34px] font-bold">Recuperador de calor</h2>
        <div className="flex">
          <div className="flex min-w-0 flex-1 flex-col gap-[6px]">
            <section className={BOX}>
              <div className="flex h-[22px] items-center justify-between border-b border-[#646464] bg-[#d3d3d3] pl-[3px]">
                <h3>Intercambiador de calor</h3><EditButton label="Editar intercambiador" />
              </div>
              <div className="flex flex-col gap-[6px] p-[9px]">
                <NumberRow id="ter" label="Eficiencia térmica" value="70.00" unit="%" labelWidth="w-[132px]" />
                <NumberRow id="hig" label="Eficiencia higrométrica" value="60.00" unit="%" check labelWidth="w-[132px]" />
              </div>
            </section>
            <section className={BOX}>
              <div className="flex h-[22px] items-center justify-between bg-[#d3d3d3] pl-[3px]">
                <h3>Ventiladores</h3><EditButton label="Editar ventiladores" />
              </div>
            </section>
            <section className={BOX}>
              <div className="flex h-[26px] items-center gap-[3px] border-b border-[#646464] bg-[#d3d3d3] pl-[3px]">
                <Check id="bypass" /><label htmlFor="bypass">Bypass de aire exterior</label>
              </div>
              <div className="flex flex-col gap-[6px] p-[9px]">
                <NumberRow id="tmin" label="Temperatura mínima" value="20.0" unit="°C" labelWidth="w-[104px]" />
                <NumberRow id="tmax" label="Temperatura máxima" value="24.0" unit="°C" labelWidth="w-[104px]" />
              </div>
            </section>
          </div>
          <div className="ml-[2px] w-[43px] border-x border-l-[#a0a0a0] border-r-[#a0a0a0] pt-1 pl-[7px] shadow-[inset_1px_0_#fff,1px_0_#fff]">
            <button type="button" aria-label="Atrás" className="flex h-6 w-6 items-center justify-center rounded-[3px] border border-[#707070] bg-linear-to-b from-[#f2f2f2] to-[#d0d0d0] shadow-[inset_0_0_0_1px_#fafafa]">
              <ArrowIcon dir="left" />
            </button>
          </div>
          <div className="flex flex-col gap-4 pt-2 pr-[5px] pl-3">
            {[["#00e020", "Importar", "M0 29 16 14V22H30V36H16V44Z"], ["#f01414", "Exportar", "M32 30 16 15V22H0V38H16V46Z"]].map(([c, label, d]) => (
              <button key={label} type="button" aria-label={label}>
                <Ico box="0 0 48 48" w={16} h={16}>
                  <path d="M16 2H47V35H16Z" fill="#111" /><path d="M24 4H38V14H24Z" fill="#fff" /><path d="M19 4V30M43 4V30M19 20H43" stroke="#808020" strokeWidth="3" /><path d="M30 24H40V33H30Z" fill="#eee" />
                  <path d={d} fill={c} transform="translate(2 2)" stroke="#444" strokeWidth="1" />
                </Ico>
              </button>
            ))}
            <button type="button" aria-label="Abrir listado">
              <Ico box="0 0 48 48" w={16} h={16}>
                <path d="M4 6H34V44H4Z" fill="#fff" stroke="#222" strokeWidth="3" />
                <path d="M8 16H14M17 16H23M8 26H14M17 26H23M8 36H14M17 36H23" stroke="#c9c9c9" strokeWidth="5" />
                <path d="M30 2H47V18L41 14 30 25 24 20 36 8Z" fill="#ff1616" />
              </Ico>
            </button>
          </div>
        </div>
      </div>
    </main>
  );
}

/* ---------- ribbon ---------- */

function Cmd({ icon, lines, width, off }) {
  return (
    <button type="button" disabled={off} className={`flex shrink-0 flex-col items-center pt-1 ${width} ${off ? "text-[#acacac]" : ""}`}>
      {icon}
      <span className="mt-1 leading-[13px] whitespace-nowrap">
        {lines.map((l) => <span key={l} className="block">{l}</span>)}
      </span>
    </button>
  );
}

function Group({ title, width = "", children }) {
  return (
    <section className={`mr-px flex shrink-0 flex-col border-r-2 border-white shadow-[1px_0_#b8b8b8] ${width}`}>
      <div className="flex h-[76px]">{children}</div>
      <h2 className="h-[17px] border-t border-[#dcdcdc] bg-[#e9e9e9] text-center leading-[18px] whitespace-nowrap">{title}</h2>
    </section>
  );
}

function Ribbon() {
  return (
    <div className="flex overflow-hidden border-b border-[#a5a5a5] bg-[#f9f9f7]">
      <Group title="Datos generales" width="w-[220px]">
        <Cmd icon={<GearIcon />} lines={["Parámetros", "generales"]} width="w-[60px]" />
        <Cmd icon={<PinIcon />} lines={["Datos del", "emplazamiento"]} width="w-[76px]" />
        <Cmd icon={<MultiEditIcon />} lines={["Edición múltiple", "de recintos"]} width="w-[80px]" />
      </Group>
      <Group title="Zonas" width="w-[507px]">
        <Cmd icon={<NewZoneIcon />} lines={["Nueva", "zona"]} width="w-[40px]" off />
        <Cmd icon={<NewTerminalIcon />} lines={["Nueva unidad", "terminal"]} width="w-[75px]" off />
        <Cmd icon={<HvacIcon />} lines={["Sistemas de", "climatización"]} width="w-[66px]" />
        <Cmd icon={<NewRoomIcon />} lines={["Nuevo", "recinto"]} width="w-[40px]" off />
        <Cmd icon={<EraseIcon />} lines={["Borrar"]} width="w-[40px]" />
        <Cmd icon={<DuplicateIcon />} lines={["Duplicar"]} width="w-[43px]" />
        <Cmd icon={<BinocularIcon />} lines={["Buscar"]} width="w-[43px]" />
        <div className="my-px ml-[2px] flex w-[93px] flex-col gap-[11px] border-r border-l border-[#cfcfcf] pt-[7px] pl-[8px]">
          {[["up", "arriba"], ["down", "abajo"]].map(([dir, word]) => (
            <button key={dir} type="button" className="flex gap-[3px] text-left leading-[13px] whitespace-nowrap">
              <ArrowIcon dir={dir} />
              <span><span className="block">Desplazar</span><span className="block">hacia {word}</span></span>
            </button>
          ))}
        </div>
        <div className="flex flex-col gap-[9px] pt-[5px] pl-[7px]">
          <button type="button" className="flex h-4 items-center gap-[3px]"><ScissorsIcon />Cortar</button>
          <button type="button" className="flex h-4 items-center gap-[3px]"><CopyIcon />Copiar</button>
          <button type="button" disabled className="flex h-4 items-center gap-[3px] text-[#acacac]"><PasteIcon />Pegar</button>
        </div>
      </Group>
      <Group title="Errores" width="w-[62px]">
        <Cmd icon={<CheckModelIcon />} lines={["Comprobar", "el modelo"]} width="w-[60px]" />
      </Group>
      <div className="flex min-w-0 flex-1 flex-col">
        <div className="h-[76px]" />
        <div className="h-[17px] border-t border-[#dcdcdc] bg-[#e9e9e9]" />
      </div>
      <span className="mr-px w-[3px] border-r border-[#b8b8b8]" />
      <Group title="COMcheck" width="w-[59px]">
        <Cmd icon={<ExportIcon />} lines={["Exportar"]} width="w-[57px]" />
      </Group>
      <Group title="Modelo BIM" width="w-[139px]">
        <Cmd icon={<EdgesIcon />} lines={["Aristas"]} width="w-[40px]" />
        <Cmd icon={<RefreshIcon />} lines={["Actualizar"]} width="w-[52px]" />
        <Cmd icon={<UserIcon />} lines={["Bárbara"]} width="w-[45px]" />
      </Group>
    </div>
  );
}

function Header() {
  return (
    <header className="flex">
      <div className="flex w-12 shrink-0 flex-col bg-[#b4b4b4]">
        <button type="button" aria-label="CYPETHERM EPlus" className="flex h-12 items-center justify-center border border-[#c8c8c8] bg-white"><LogoIcon /></button>
      </div>
      <div className="min-w-0 flex-1">
        <div className="flex h-[26px] items-center text-white">
          <div className="flex h-full w-[104px] shrink-0 items-center gap-3 border-l border-[#c8c8c8] bg-[#f6f6f6] pl-[5px]">
            <button type="button" aria-label="Guardar"><SaveIcon /></button>
            <button type="button" aria-label="Deshacer"><UndoIcon color="#10107c" /></button>
            <button type="button" aria-label="Rehacer" disabled><UndoIcon color="#b4b4b4" flip /></button>
            <button type="button" aria-label="Recintos"><RoomExportIcon /></button>
          </div>
          <h1 className="min-w-0 flex-1 truncate text-center text-[12px] font-bold">
            CYPETHERM EPlus - v2019.beta.a [BIMserver.center] - [C:\...\Oficinas VRV y Recuperador.tri]
          </h1>
          {[["Minimizar", "M0 5.500H10"], ["Maximizar", "M.5.5H9.500V9.500H.5Z"], ["Cerrar", "M0 0 10 10M10 0 0 10"]].map(([label, d]) => (
            <button key={label} type="button" aria-label={label} className="flex w-12 shrink-0 justify-center">
              <svg width="10" height="10" viewBox="0 0 10 10" fill="none" stroke="#fff" aria-hidden="true"><path d={d} /></svg>
            </button>
          ))}
        </div>
        <div className="flex h-[25px] items-end bg-[#b4b4b4]">
          <div className="flex h-[22px] flex-1 items-center pl-px">
            <button type="button" className="h-full w-14 bg-[#f9f9f7] pb-px">Edificio</button>
            <button type="button" className="w-[104px]">Planos de planta</button>
            <button type="button" className="w-14">Cálculo</button>
          </div>
          <div className="flex h-[25px] items-center pr-1">
            <button type="button" aria-label="Web" className="flex items-center gap-[2px]"><GlobeIcon /><Caret /></button>
            <button type="button" aria-label="Ayuda" className="ml-[6px] flex items-center gap-[2px]"><BookIcon /><Caret /></button>
          </div>
        </div>
      </div>
    </header>
  );
}

function Dots({ vertical }) {
  return (
    <div className={vertical ? "flex w-2 flex-col items-center justify-center gap-[2px]" : "flex h-[9px] items-center justify-center gap-[2px]"}>
      {[0, 1, 2, 3].map((i) => <span key={i} className="h-[2px] w-[2px] bg-[#5c5c5c]" />)}
    </div>
  );
}

export default function App() {
  return (
    <div className="flex min-h-screen flex-col border-t border-r-2 border-b border-l border-[#042c6e] bg-[#1860ab] pt-1 pr-[3px] pb-1 pl-1 font-['Liberation_Sans','Arial',sans-serif] text-[11px] leading-4 text-black">
      <Header />
      <Ribbon />
      <div className="flex flex-1 bg-[#b4b4b4] px-[7px] pt-[6px] pb-[7px]">
        <aside className="flex w-[328px] shrink-0 flex-col">
          <TreePanel />
          <Dots />
          <ViewPanel />
        </aside>
        <Dots vertical />
        <Workspace />
      </div>
    </div>
  );
}
